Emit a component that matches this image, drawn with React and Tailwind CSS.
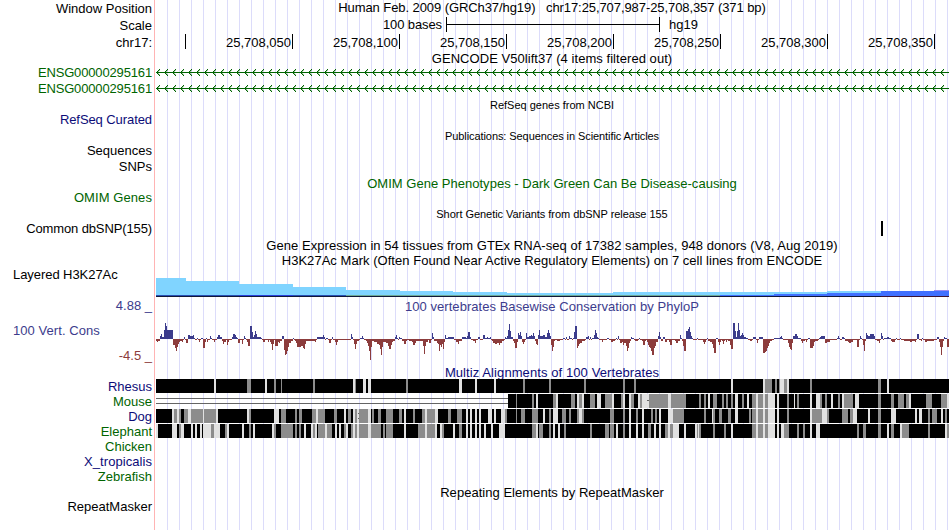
import clsx from 'clsx';

// x of the first pixel of the data panel; all track data below uses image x
const X0 = 156;
const PANEL_W = 794;

const NAVY = 'text-[#0c0c78]';
const GREEN = 'text-[#006400]';
const INDIGO = 'text-[#3c3c8c]';
const MAROON = 'text-[#8c3c3c]';

const LABELS = [
  { text: 'Window Position', className: 'mt-px' },
  { text: 'Scale', className: 'mt-px' },
  { text: 'chr17:', className: 'mt-px' },
  { text: 'ENSG00000295161', className: clsx('mt-[14px] tracking-[-0.15px]', GREEN) },
  { text: 'ENSG00000295161', className: clsx('tracking-[-0.15px]', GREEN) },
  { text: 'RefSeq Curated', className: clsx('mt-[15px] tracking-[-0.08px]', NAVY) },
  { text: 'Sequences', className: 'mt-[15px]' },
  { text: 'SNPs', className: '' },
  { text: 'OMIM Genes', className: clsx('mt-[15px] tracking-[0.08px]', GREEN) },
  { text: 'Common dbSNP(155)', className: 'mt-[15px] tracking-[-0.12px]' },
  { text: 'Layered H3K27Ac', className: 'mt-[30px] self-start pl-[13px] tracking-[-0.06px]' },
  { text: '4.88 _', className: clsx('mt-[15px]', INDIGO) },
  { text: '100 Vert. Cons', className: clsx('mt-[9px] self-start pl-[13px] tracking-[0.06px]', INDIGO) },
  { text: '-4.5 _', className: clsx('mt-[9px]', MAROON) },
];

const SPECIES = [
  { text: 'Rhesus', className: NAVY },
  { text: 'Mouse', className: GREEN },
  { text: 'Dog', className: NAVY },
  { text: 'Elephant', className: GREEN },
  { text: 'Chicken', className: GREEN },
  { text: 'X_tropicalis', className: clsx('tracking-[0.06px]', NAVY) },
  { text: 'Zebrafish', className: GREEN },
];

const RULER = ['25,708,050', '25,708,100', '25,708,150', '25,708,200', '25,708,250', '25,708,300', '25,708,350'];

// [x, top] steps of the light blue layer
const H3K_LIGHT = [[156, 278], [186, 281], [239, 284], [293, 287], [346, 290], [400, 291], [453, 292], [507, 293], [613, 292], [827, 291], [881, 296]];
const H3K_BLUE = [[720, 295], [774, 294], [827, 293], [881, 291]];

// "x,height" pairs, every run lasts until the next x; positive goes up
const PHYLOP = `
156,-2 157,-3 158,-2 160,3 161,5 162,2 164,9 165,16 166,13 167,9 173,-6 175,-9 176,-12 177,-8 178,-5 179,-3 180,-2 182,-3 183,-1
184,2 185,-1 186,-4 188,4 190,3 193,4 194,1 195,-1 197,1 198,-1 199,-3 200,-1 201,1 203,-9 205,-3 206,1 207,-3 208,-1 210,3 211,1 212,-1
214,-3 215,-1 217,2 218,4 220,2 222,-2 223,-5 224,-3 226,-1 227,-6 228,-3 229,-1 232,2 233,5 235,4 236,2 237,1 238,-4 240,-1 242,-5 243,-1
244,3 245,1 246,-1 247,-3 248,-7 250,13 252,7 253,2 254,4 255,8 256,5 257,2 261,1 262,-1 263,-3 265,-1 268,-3 269,-1 270,-3 271,-5 272,-11
273,-5 274,-1 275,-7 277,-7 278,-3 279,-4 280,-2 282,3 284,-11 285,-16 286,-15 287,-12 288,-8 289,-4 291,-2 293,1 294,-1 295,-2 296,-4
297,-8 301,-7 303,-9 304,-10 305,-5 306,-2 315,-3 316,-1 317,2 323,4 324,2 325,-1 326,1 328,-1 329,-4 331,-1 332,2 333,-1 335,-3 336,-6
337,-3 338,-1 351,5 352,2 353,-1 354,-5 355,-10 356,-5 357,-2 359,-1 360,1 362,3 363,1 364,-1 366,-2 367,-4 368,-7 369,-12 370,-21
371,-8 372,-2 374,-3 377,-5 379,-6 380,-10 381,-16 382,-8 383,-3 386,-4 388,-7 389,-10 391,-6 392,-3 393,-2 395,2 396,4 397,1 398,-1
399,2 400,1 402,-2 404,-5 406,-2 407,-1 409,-2 412,-3 413,-6 415,-4 416,-2 420,-2 423,-7 424,-15 425,-7 426,-3 428,-1 429,-4 431,-1
432,6 433,2 434,-2 437,-4 438,-5 439,-12 440,-6 441,-8 442,-5 443,-10 444,-3 445,4 446,1 448,2 454,-1 456,-3 458,-5 459,-2 462,2 466,1
467,3 468,7 470,2 471,-1 473,-2 475,-4 476,-1 478,2 480,-1 483,4 485,1 487,2 488,1 490,2 491,-1 492,-2 493,-4 495,-5 497,-4 499,-6 500,-4
502,-2 504,-1 505,2 506,1 507,3 508,9 509,15 510,8 511,2 513,-2 514,-4 515,-9 517,-3 518,6 519,4 520,7 521,3 522,-3 523,-5 524,-3 525,-1
526,6 527,2 529,3 531,4 532,3 533,6 534,3 535,-2 536,-5 537,-6 538,4 539,9 540,3 543,4 545,2 547,6 548,9 549,6 550,3 551,-6 552,-12
553,-8 554,-2 555,-1 557,-2 560,-1 563,1 565,-1 566,2 567,-1 569,3 570,1 572,-1 573,1 574,7 575,13 577,-9 578,-7 579,-5 580,-4 582,-2
585,-1 586,2 588,3 589,-1 590,2 591,-1 592,1 594,4 595,9 596,6 597,2 598,1 599,-1 602,-3 603,-1 607,1 609,-1 611,-3 613,-2 615,-1
616,1 617,-1 618,3 619,-1 620,-4 622,-3 623,-6 624,-4 626,-7 627,-12 628,-9 629,-4 630,-2 631,2 632,1 634,-1 635,-2 638,-1 639,1 640,-1
642,-2 643,-6 645,-2 646,-1 647,-3 648,-6 649,-8 650,-9 651,-12 652,-16 654,-9 655,-7 656,-3 658,3 659,7 660,2 661,-2 663,2 665,-3 667,-1
669,-3 670,-6 672,-1 675,-2 676,-4 678,-2 680,4 681,1 682,-2 683,-7 684,-12 686,8 688,10 689,12 690,7 691,3 692,1 693,-1 697,1 698,-1
703,-3 704,-5 705,-3 706,-1 707,1 708,-2 710,-3 712,-5 713,-9 714,-14 716,1 718,-3 719,-6 720,-3 721,-1 722,-2 723,-5 724,-2 725,-1
726,-3 727,-1 728,-2 730,-6 731,-10 733,16 735,8 736,2 737,8 738,16 739,9 740,3 741,4 742,6 743,4 744,2 746,1 748,-1 750,-2 752,-1 753,2
756,-1 757,-4 758,-1 759,2 763,-14 765,-13 766,-12 767,-9 768,-7 769,-4 770,-2 772,-1 774,1 780,2 781,3 782,1 783,-1 788,-4 789,-8
790,-10 791,-11 792,-4 793,3 795,5 797,3 798,1 801,-2 802,-4 803,-2 805,-1 806,-3 807,-1 808,1 810,-9 813,-7 814,-3 815,-2 818,-1
819,1 820,2 821,3 825,-4 827,-3 830,-1 837,1 838,3 839,1 840,-1 842,2 844,1 845,-2 848,-3 849,-4 851,-3 853,-1 857,-8 859,-1 860,3 861,1
862,-1 863,-6 864,-12 865,-2 866,6 867,4 868,3 870,5 874,3 875,-1 877,-2 879,-4 880,-1 881,6 882,3 883,-1 884,1 887,2 889,1 891,-2 892,-3
895,-1 896,1 897,-1 900,1 901,-1 904,-2 910,-3 912,-2 915,-3 916,-1 917,5 919,-1 921,-2 922,1 923,-1 925,-3 927,-2 934,-1 937,2 939,-3
940,-8 941,-16 942,-8 943,-2 944,2 945,1 947,-8 949,-1`;

// strips of an alignment row that are not black: G is gray, L is light
const SHARED = 'G752:4 L756:2 G758:5 L763:2 G765:3 L768:7 L777:2 L810:2 G878:3';
const ALIGNMENTS = {
  rhesus: `L214:2 G247:4 L265:2 G274:2 G281:1 G313:2 L353:2 G355:1 L363:3 L368:3 G406:2 L459:3 L475:2 L494:2 G523:2 G549:2 G584:2
    G623:2 G634:2 L731:2 L763:2 G765:7 G775:2 G779:1 L780:4 G784:3 L787:2 G810:2 G878:3 L887:2`,
  mouse: `G516:1 G532:2 L536:2 G553:3 L556:2 G571:4 L577:2 G579:3 L582:2 G590:5 L597:4 G605:7 L612:2 G621:2 L623:2 L629:2 G631:3 L638:2
    G640:2 L642:7 G649:19 L668:3 G671:15 G699:2 G704:2 L708:2 G713:4 G722:2 G726:2 G731:2 L735:3 G742:2 L747:2 ${SHARED} G787:2 L794:1
    G797:2 L816:4 G820:2 G825:2 L831:2 G838:2 L842:2 G844:9 L855:4 G891:3 G898:6 G906:3 L909:2 G926:6 G941:6 L947:2`,
  dog: `L172:2 G174:3 L177:2 G179:2 G184:4 L188:3 G191:12 L203:1 G204:12 L216:2 L247:2 G249:2 L274:5 G281:5 G295:2 G299:3 G312:4 L316:2
    G318:7 G334:3 L344:2 G348:3 L353:2 G355:2 L357:2 G359:9 L368:3 G372:2 G378:3 G386:7 G399:3 L404:2 G413:2 G422:3 L425:2 G427:8 L435:3
    G448:3 G457:5 L466:2 L470:2 L475:2 L479:2 L488:4 L494:2 L501:4 G505:2 G516:1 G521:4 G532:6 L543:2 G549:2 L553:5 G562:4 G569:2 G577:2
    L579:3 G582:2 G610:4 G623:2 L629:2 G636:2 L642:2 G651:2 G655:2 L659:2 L668:5 G673:11 G704:2 L712:1 G713:2 G719:3 G728:3 L735:3 G749:2
    ${SHARED} G787:2 G812:10 L822:5 G827:2 G842:6 G850:3 L853:4 L868:2 L891:5 L915:2 L919:3 G928:2 G932:5 L941:2 G945:2`,
  elephant: `L156:2 L172:5 G179:2 L181:3 L191:2 L195:2 L200:2 L203:8 G211:3 L214:6 G225:2 L227:2 L242:2 G249:2 L253:2 L272:2 G274:2 G281:12
    G295:2 G299:2 L304:2 L311:2 G313:2 L315:2 G318:7 L325:2 G327:5 L335:2 L339:2 G344:2 L346:2 G351:2 L353:2 G355:2 L357:2 G359:9 L368:3
    G371:10 G383:2 G386:7 L404:2 G418:7 L425:2 G427:8 L435:2 L440:2 G442:2 L453:2 G459:3 L466:2 L470:2 L475:2 L479:2 L484:2 L491:2
    L499:6 G532:4 L536:2 G539:4 G549:2 L553:2 L558:2 G564:2 G590:2 G605:4 G610:4 L616:2 G623:2 L629:2 L636:2 L642:2 G648:3 L654:2 L659:2
    G665:3 L668:2 G670:3 L673:6 L684:2 L695:2 G697:1 L698:1 G699:2 G713:2 G724:2 L731:2 ${SHARED} L781:3 G784:5 G797:2 G803:2 L816:4 G857:2
    G863:3 L887:2 G891:3 L900:2 G902:7 G928:2 L945:2 G947:2`,
};

// svg drawn in image coordinates, cropped to one horizontal band
function Band({ top, height, className, children }) {
  return (
    <svg
      className={clsx('block shrink-0', className)}
      width={PANEL_W}
      height={height}
      viewBox={`${X0} ${top} ${PANEL_W} ${height}`}
      shapeRendering="crispEdges"
    >
      {children}
    </svg>
  );
}

function Title({ className, children }) {
  return <div className={clsx('shrink-0 pr-[2px] text-center leading-4 whitespace-pre', className)}>{children}</div>;
}

function GeneLine({ y }) {
  const arrows = [];
  const soft = [];
  for (let x = 156; x < 946; x += 8) {
    for (const s of [-1, 1]) {
      for (const d of [1, 2, 3]) {
        arrows.push(`M${x + d} ${y + s * d}h1v1h-1z`);
      }
      // lighter pixels beside the diagonal
      soft.push(`M${x + 2} ${y + s}h1v1h-1zM${x + 3} ${y + s * 2}h1v1h-1z`);
    }
  }
  return (
    <g fill="#006400">
      <rect x={156} y={y} width={793} height={1} />
      <path d={arrows.join('')} />
      <path d={soft.join('')} opacity={0.35} />
    </g>
  );
}

function Steps({ steps, end, fill }) {
  return steps.map(([x, top], i) => (
    <rect key={x} x={x} y={top} width={(steps[i + 1]?.[0] ?? end) - x} height={296 - top} fill={fill} />
  ));
}

function Phylop() {
  const runs = PHYLOP.trim().split(/\s+/).map(s => s.split(',').map(Number));
  return (
    <Band top={315} height={50}>
      {runs.map(([x, h], i) => {
        const end = runs[i + 1]?.[0] ?? 949;
        return (
          <rect
            key={x}
            x={x}
            y={h > 0 ? 339 - h : 339}
            width={Math.max(end - x, 0)}
            height={Math.abs(h)}
            fill={h > 0 ? '#3c3c8c' : '#8c3c3c'}
          />
        );
      })}
    </Band>
  );
}

function Alignment({ strips, start = X0, top, children }) {
  return (
    <Band top={top} height={15}>
      <rect x={start} y={top} width={949 - start} height={14} fill="#000" />
      {strips.trim().split(/\s+/).map(s => {
        const [x, w] = s.slice(1).split(':').map(Number);
        return <rect key={s} x={x} y={top} width={w} height={14} fill={s[0] === 'G' ? '#8c8c8c' : '#e1e1e1'} />;
      })}
      {children}
    </Band>
  );
}

export default function App() {
  return (
    <div className="flex h-[530px] w-[950px] overflow-hidden bg-white font-['Liberation_Sans',Arial,sans-serif] text-[13px] text-black">
      <div className="flex w-[154px] shrink-0 flex-col items-end pr-[2px]">
        {LABELS.map((label, i) => (
          <div key={i} className={clsx('h-4 shrink-0 leading-4 whitespace-pre', label.className)}>{label.text}</div>
        ))}
        <div className="mt-[15px] flex flex-col items-end">
          {SPECIES.map(label => (
            <div key={label.text} className={clsx('h-[15px] leading-4', label.className)}>{label.text}</div>
          ))}
        </div>
        <div className="mt-[15px] h-4 leading-4">RepeatMasker</div>
      </div>

      <div className="mr-px w-px shrink-0 bg-[#ffb4b4]" />

      <div className="flex w-[794px] shrink-0 flex-col bg-[repeating-linear-gradient(90deg,transparent_0_11px,#dcdcfa_11px_12px)]">
        <Title className="h-[17px] tracking-[-0.08px]">Human Feb. 2009 (GRCh37/hg19)   chr17:25,707,987-25,708,357 (371 bp)</Title>

        <div className="flex h-[17px] shrink-0 leading-4">
          <div className="w-[286px] text-right tracking-[-0.1px]">100 bases</div>
          <div className="ml-1 flex h-[15px] w-[214px] flex-col justify-center border-x border-black">
            <div className="h-px bg-black" />
          </div>
          <div className="ml-[9px]">hg19</div>
        </div>

        <div className="flex h-[17px] shrink-0">
          <div className="h-[15px] w-[30px] border-r border-black" />
          {RULER.map(pos => (
            <div key={pos} className="h-[15px] w-[107px] border-r border-black pr-px text-right leading-[18px]">{pos}</div>
          ))}
        </div>

        <Title className="h-4 tracking-[0.05px]">GENCODE V50lift37 (4 items filtered out)</Title>
        <Band top={67} height={28}>
          <GeneLine y={72} />
          <GeneLine y={88} />
        </Band>

        <Title className="mt-[2px] h-4 text-[11px]">RefSeq genes from NCBI</Title>
        <Title className="mt-[15px] h-4 text-[11px] tracking-[-0.08px]">Publications: Sequences in Scientific Articles</Title>
        <Title className={clsx('mt-8 h-4 tracking-[0.02px]', GREEN)}>OMIM Gene Phenotypes - Dark Green Can Be Disease-causing</Title>
        <Title className="mt-[14px] h-[15px] text-[11px] tracking-[-0.04px]">Short Genetic Variants from dbSNP release 155</Title>
        <Band top={221} height={17}>
          <rect x={881} y={221} width={2} height={15} fill="#000" />
        </Band>
        <Title className="h-[15px] tracking-[0.045px]">Gene Expression in 54 tissues from GTEx RNA-seq of 17382 samples, 948 donors (V8, Aug 2019)</Title>
        <Title className="h-4 tracking-[0.035px]">H3K27Ac Mark (Often Found Near Active Regulatory Elements) on 7 cell lines from ENCODE</Title>

        <Band top={269} height={30}>
          <Steps steps={H3K_LIGHT} end={881} fill="#80d4ff" />
          <Steps steps={H3K_BLUE} end={949} fill="#4070ff" />
          <rect x={934} y={290} width={15} height={1} fill="#9a8cf0" />
          <rect x={156} y={295} width={190} height={1} fill="#2850b4" />
          <rect x={239} y={295} width={54} height={1} fill="#2840dc" />
          <rect x={346} y={295} width={374} height={1} fill="#6eaa96" />
          <rect x={156} y={296} width={725} height={1} fill="#101838" />
          <rect x={881} y={296} width={68} height={1} fill="#3c1432" />
        </Band>

        <Title className={clsx('h-4 tracking-[0.04px]', INDIGO)}>100 vertebrates Basewise Conservation by PhyloP</Title>
        <Phylop />
        <Title className={clsx('h-[14px] tracking-[0.09px]', NAVY)}>Multiz Alignments of 100 Vertebrates</Title>

        <Alignment top={379} strips={ALIGNMENTS.rhesus} />
        <Alignment top={394} start={508} strips={ALIGNMENTS.mouse}>
          <rect x={156} y={398} width={352} height={1} fill="#646464" />
          <rect x={156} y={403} width={352} height={1} fill="#646464" />
          <rect x={647} y={400} width={2} height={1} fill="#646464" />
        </Alignment>
        <Alignment top={409} strips={ALIGNMENTS.dog}>
          <rect x={358} y={413} width={1} height={1} fill="#646464" />
          <rect x={358} y={418} width={1} height={1} fill="#646464" />
        </Alignment>
        <Alignment top={424} strips={ALIGNMENTS.elephant} />

        <Title className="mt-[46px] h-4 tracking-[0.03px]">Repeating Elements by RepeatMasker</Title>
      </div>
    </div>
  );
}
